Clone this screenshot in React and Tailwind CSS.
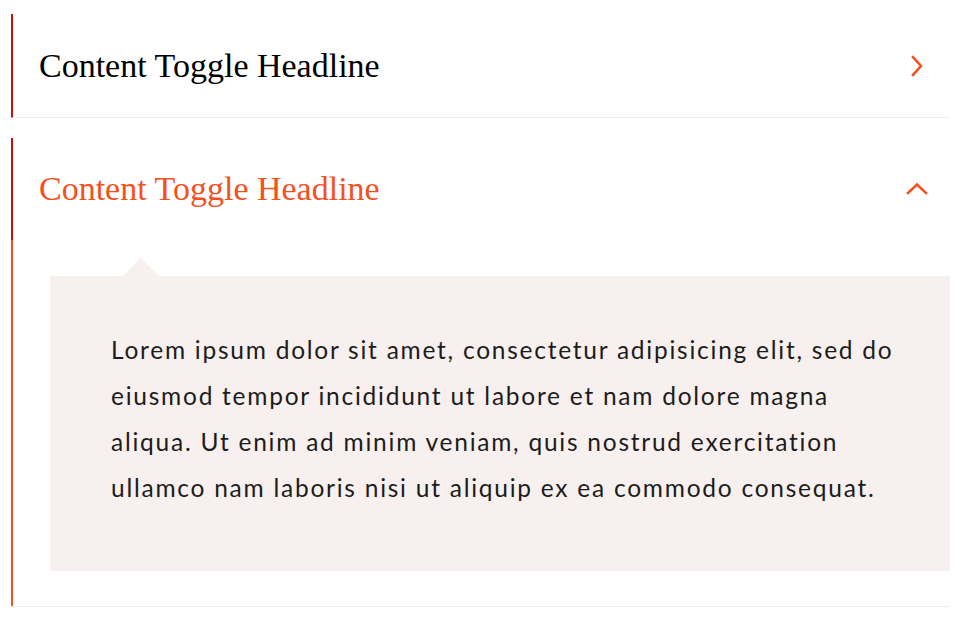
import { useState } from "react";

const bodyLines = [
    "Lorem ipsum dolor sit amet, consectetur adipisicing elit, sed do",
    "eiusmod tempor incididunt ut labore et nam dolore magna",
    "aliqua. Ut enim ad minim veniam, quis nostrud exercitation",
    "ullamco nam laboris nisi ut aliquip ex ea commodo consequat."
];

const items = [
    { title: "Content Toggle Headline", lines: bodyLines },
    { title: "Content Toggle Headline", lines: bodyLines }
];

const Chevron = ({ open }) => (
    <svg width="24" height="24" viewBox="0 0 24 24" fill="none" stroke="#f4511e" strokeWidth="2.6" strokeLinecap="square">
        {open ? <path d="M3 16 L12 7.5 L21 16" /> : <path d="M8 3 L16 12 L8 21" />}
    </svg>
);

const Toggle = ({ item, open, onToggle }) => {
    return (
        <div className={open ? "border-b border-[#ececec]" : ""}>
            <button
                onClick={onToggle}
                className={`w-full flex items-center justify-between pl-[26px] pr-[21px] border-l-2 border-[#c8100a] text-left ${open ? "h-[102px]" : "h-[104px] border-b border-b-[#fbe9e5]"}`}>
                <span className={`text-[34px] leading-none ${open ? "text-[#f4511e]" : "text-black"}`} style={{ fontFamily: '"Liberation Serif", serif' }}>
                    {item.title}
                </span>
                <Chevron open={open} />
            </button>
            {open && (
                <div className="border-l-2 border-[#f4511e] pl-[37px] pt-[18px] pb-[35px]">
                    <div className="ml-[73px] w-0 h-0 border-l-[18px] border-r-[18px] border-b-[18px] border-l-transparent border-r-transparent border-b-[#f8f0ee]" />
                    <div className="bg-[#f8f0ee] pl-[61px] pr-[20px] pt-[51px] pb-[60px]">
                        <p className="text-[24.5px] leading-[46px] tracking-[1.75px] text-[#1c1c1c] whitespace-nowrap" style={{ fontFamily: '"Lato", "Open Sans", sans-serif' }}>
                            {item.lines.map((line, i) => (
                                <span key={i} className="block">{line}</span>
                            ))}
                        </p>
                    </div>
                </div>
            )}
        </div>
    );
};

export default function App() {
    const [openIndex, setOpenIndex] = useState(1);

    return (
        <div className="bg-white min-h-[618px] pt-[14px] pl-[11px] pr-[10px]">
            <div className="flex flex-col gap-y-[20px]">
                {items.map((item, index) => (
                    <Toggle
                        key={index}
                        item={item}
                        open={openIndex === index}
                        onToggle={() => setOpenIndex(openIndex === index ? -1 : index)}
                    />
                ))}
            </div>
        </div>
    );
}
